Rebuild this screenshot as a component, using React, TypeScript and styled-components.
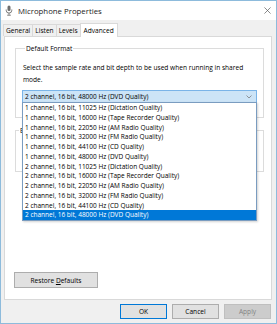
import React from "react";
import styled, { createGlobalStyle } from "styled-components";

const formats = [
  "1 channel, 16 bit, 11025 Hz (Dictation Quality)",
  "1 channel, 16 bit, 16000 Hz (Tape Recorder Quality)",
  "1 channel, 16 bit, 22050 Hz (AM Radio Quality)",
  "1 channel, 16 bit, 32000 Hz (FM Radio Quality)",
  "1 channel, 16 bit, 44100 Hz (CD Quality)",
  "1 channel, 16 bit, 48000 Hz (DVD Quality)",
  "2 channel, 16 bit, 11025 Hz (Dictation Quality)",
  "2 channel, 16 bit, 16000 Hz (Tape Recorder Quality)",
  "2 channel, 16 bit, 22050 Hz (AM Radio Quality)",
  "2 channel, 16 bit, 32000 Hz (FM Radio Quality)",
  "2 channel, 16 bit, 44100 Hz (CD Quality)",
  "2 channel, 16 bit, 48000 Hz (DVD Quality)",
];

const tabs = ["General", "Listen", "Levels", "Advanced"];

export default function App() {
  const selected = formats[formats.length - 1];

  return (
    <>
      <GlobalStyle />
      <Window>
        <TitleBar>
          <MicIcon viewBox="0 0 8 11">
            <rect x="2.5" y="0.5" width="3" height="5.5" rx="1.5" fill="#6d6d6d" />
            <path d="M1.2 4.5v0.8a2.8 2.8 0 0 0 5.6 0v-0.8M4 8.2v1.6M2.2 10.2h3.6" stroke="#6d6d6d" strokeWidth="0.9" fill="none" />
          </MicIcon>
          <Title>Microphone Properties</Title>
          <CloseIcon viewBox="0 0 8 8">
            <path d="M0.5 0.5l7 7M7.5 0.5l-7 7" stroke="#5a5a5a" strokeWidth="0.8" />
          </CloseIcon>
        </TitleBar>

        <TabStrip>
          {tabs.map((t) => (
            <Tab key={t} active={t === "Advanced"}>
              {t}
            </Tab>
          ))}
        </TabStrip>

        <Panel>
          <GroupBox>
            <Legend>Default Format</Legend>
            <Description>
              Select the sample rate and bit depth to be used when running in shared mode.
            </Description>
            <Dropdown>
              <span>{selected}</span>
              <Chevron viewBox="0 0 6 4">
                <path d="M0.5 0.5l2.5 2.5 2.5-2.5" stroke="#707070" strokeWidth="0.7" fill="none" />
              </Chevron>
              <OptionList>
                {formats.map((f, i) => (
                  <Option key={f + i} selected={i === formats.length - 1}>
                    {f}
                  </Option>
                ))}
              </OptionList>
            </Dropdown>
          </GroupBox>

          {/* sits behind the open list, only its edges peek out */}
          <ExclusiveBox>
            <Legend>Exclusive Mode</Legend>
          </ExclusiveBox>

          <Spacer />
          <RestoreButton>
            <span>
              Restore <u>D</u>efaults
            </span>
          </RestoreButton>
        </Panel>

        <Footer>
          <DialogButton primary>OK</DialogButton>
          <DialogButton>Cancel</DialogButton>
          <DialogButton disabled>Apply</DialogButton>
        </Footer>
      </Window>
    </>
  );
}

const GlobalStyle = createGlobalStyle`
  body {
    margin: 0;
    font-family: "Open Sans", "Noto Sans", sans-serif;
    background: #ffffff;
  }
`;

const Window = styled.div`
  width: 277px;
  height: 324px;
  box-sizing: border-box;
  border: 1px solid #8dbbdc;
  background: #f0f0f0;
  display: flex;
  flex-direction: column;
`;

const TitleBar = styled.div`
  height: 19px;
  background: #ffffff;
  display: flex;
  align-items: center;
  padding: 0 4px 0 4px;
  gap: 5px;
`;

const MicIcon = styled.svg`
  width: 8px;
  height: 11px;
`;

const Title = styled.div`
  flex: 1;
  font-size: 7.8px;
  color: #1a1a1a;
`;

const CloseIcon = styled.svg`
  width: 7px;
  height: 7px;
  margin-right: 1px;
`;

const TabStrip = styled.div`
  height: 16px;
  display: flex;
  align-items: flex-end;
  padding-left: 3px;
`;

type TabProps = { active?: boolean };

const Tab = styled.div<TabProps>`
  height: ${(p) => (p.active ? "14px" : "12px")};
  box-sizing: border-box;
  padding: 0 ${(p) => (p.active ? "3px" : "2px")};
  display: flex;
  align-items: center;
  font-size: 6.6px;
  color: #000;
  background: ${(p) => (p.active ? "#ffffff" : "#f0f0f0")};
  border: 1px solid #d9d9d9;
  border-bottom: none;
  margin-bottom: ${(p) => (p.active ? "-1px" : "0")};
  margin-left: -1px;
  position: relative;
  z-index: ${(p) => (p.active ? 1 : 0)};
`;

const Panel = styled.div`
  flex: 1;
  margin: 0 4px 0 3px;
  background: #ffffff;
  border: 1px solid #d9d9d9;
  display: flex;
  flex-direction: column;
  padding: 7px 7px 11px 10px;
`;

const GroupBox = styled.fieldset`
  margin: 0;
  padding: 9px 6px 14px 6px;
  border: 1px solid #dcdcdc;
  min-width: 0;
`;

const ExclusiveBox = styled(GroupBox)`
  margin-top: 8px;
  height: 44px;
  padding: 0;
`;

const Legend = styled.legend`
  font-size: 6.6px;
  color: #000;
  padding: 0 1px;
  margin-left: 3px;
`;

const Description = styled.div`
  font-size: 6.6px;
  line-height: 12px;
  color: #000;
  padding-left: 1px;
  margin-bottom: 4px;
`;

const Dropdown = styled.div`
  position: relative;
  height: 13px;
  box-sizing: border-box;
  border: 1px solid #7ab4e8;
  background: #cce4f7;
  display: flex;
  align-items: center;
  justify-content: space-between;
  padding: 0 4px 0 2px;
  font-size: 6.5px;
  color: #000;
`;

const Chevron = styled.svg`
  width: 6px;
  height: 4px;
`;

const OptionList = styled.div`
  position: absolute;
  top: 100%;
  left: -1px;
  width: 235px;
  box-sizing: border-box;
  background: #ffffff;
  border: 1px solid #7a9cc0;
  box-shadow: 1px 1px 2px rgba(0, 0, 0, 0.18);
  z-index: 5;
`;

type OptionProps = { selected?: boolean };

const Option = styled.div<OptionProps>`
  height: 9.75px;
  line-height: 9.75px;
  padding-left: 2px;
  font-size: 6.5px;
  white-space: nowrap;
  color: ${(p) => (p.selected ? "#ffffff" : "#000000")};
  background: ${(p) => (p.selected ? "#0078d7" : "transparent")};
`;

const Spacer = styled.div`
  flex: 1;
`;

const buttonBase = `
  box-sizing: border-box;
  font-family: "Open Sans", "Noto Sans", sans-serif;
  font-size: 6.6px;
  display: flex;
  align-items: center;
  justify-content: center;
`;

const RestoreButton = styled.div`
  ${buttonBase}
  align-self: flex-start;
  margin-left: -1px;
  width: 84px;
  height: 16px;
  background: #e1e1e1;
  border: 1px solid #adadad;
  color: #000;
`;

const Footer = styled.div`
  height: 23px;
  display: flex;
  align-items: center;
  justify-content: flex-end;
  gap: 5px;
  padding-right: 5px;
`;

type ButtonProps = { primary?: boolean; disabled?: boolean };

const DialogButton = styled.div<ButtonProps>`
  ${buttonBase}
  width: 47px;
  height: 15px;
  background: ${(p) => (p.disabled ? "#cccccc" : "#e1e1e1")};
  border: 1px solid
    ${(p) => (p.primary ? "#0078d7" : p.disabled ? "#bfbfbf" : "#adadad")};
  color: ${(p) => (p.disabled ? "#838383" : "#000")};
`;
